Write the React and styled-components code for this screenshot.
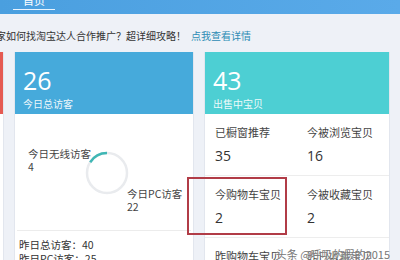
import React from 'react';
import styled, { createGlobalStyle } from 'styled-components';

const GlobalStyle = createGlobalStyle`
  body {
    margin: 0;
    background: #eef1f7;
    font-family: "Noto Sans CJK SC", "Noto Sans", sans-serif;
    color: #333;
  }
`;

const Page = styled.div`
  position: relative;
  width: 400px;
  height: 260px;
  overflow: hidden;
  background: #eef1f7;
`;

const TopBar = styled.div`
  height: 14px;
  background: linear-gradient(90deg, #4a9fdf, #5aaae9);
  display: flex;
  overflow: hidden;
`;

const Tab = styled.div`
  margin-left: 13px;
  width: 42px;
  height: 10px;
  border-bottom: 1.5px solid #e8f4ff;
  display: flex;
  justify-content: center;
  align-items: flex-end;
  color: #fff;
  font-size: 11px;
  line-height: 11px;
  padding-bottom: 3px;
  box-sizing: border-box;
`;

const Notice = styled.div`
  height: 36px;
  display: flex;
  align-items: flex-end;
  padding-bottom: 7px;
  box-sizing: border-box;
  margin-left: -4px;
  font-size: 10px;
  white-space: nowrap;
  color: #333;
`;

const Link = styled.span`
  color: #2d8cb5;
  margin-left: 5px;
`;

const Cards = styled.div`
  display: grid;
  grid-template-columns: 180px 180px 186px 180px;
  column-gap: 10px;
  margin-left: -176px;
  margin-top: 2px;
`;

const Card = styled.div`
  background: #fff;
  border: 1px solid #e2e6ee;
  border-top: none;
  height: 230px;
`;

const Header = styled.div`
  height: 62px;
  background: ${(p) => p.color};
  padding: 15px 8px 0;
  box-sizing: border-box;
  color: #fff;
`;

const BigNumber = styled.div`
  font-family: "Open Sans", "Liberation Sans", sans-serif;
  font-size: 25px;
  line-height: 26px;
`;

const HeaderLabel = styled.div`
  font-size: 10px;
  line-height: 14px;
  margin-top: 4px;
  opacity: 0.9;
`;

const ChartArea = styled.div`
  height: 116px;
  padding: 33px 0 0 13px;
  box-sizing: border-box;
  display: flex;
  align-items: flex-start;
  font-size: 10.5px;
  line-height: 13px;
  color: #444;
`;

const Legend = styled.div`
  padding-top: ${(p) => p.offset || 0}px;
  margin-left: ${(p) => p.shift || 0}px;
  white-space: nowrap;
`;

const Donut = styled.svg`
  flex: none;
  margin-top: 3px;
  margin-left: -7px;
`;

const Divider = styled.div`
  border-top: 1px solid #ececec;
  margin: 0 2px;
`;

const Yesterday = styled.div`
  padding: 7px 4px;
  font-size: 10.5px;
  line-height: 14px;
  color: #333;
`;

const Grid = styled.div`
  display: grid;
  grid-template-columns: 1fr 1fr;
`;

const Cell = styled.div`
  height: 62px;
  padding: 11px 10px 0;
  box-sizing: border-box;
  border-bottom: 1px solid #ededed;
`;

const CellLabel = styled.div`
  font-size: 11px;
  line-height: 14px;
  color: #444;
  white-space: nowrap;
`;

const CellValue = styled.div`
  font-family: "Open Sans", "Liberation Sans", sans-serif;
  font-size: 14px;
  line-height: 16px;
  margin-top: 9px;
  color: #333;
`;

const Highlight = styled.div`
  position: absolute;
  left: 187px;
  top: 177px;
  width: 100px;
  height: 58px;
  border: 2px solid #b13c47;
  box-sizing: border-box;
`;

const Watermark = styled.div`
  position: absolute;
  right: 10px;
  bottom: -2px;
  font-size: 11px;
  color: #777;
  text-shadow: 0 0 2px #fff;
  white-space: nowrap;
`;

const stats = [
  ['已橱窗推荐', '35'],
  ['今被浏览宝贝', '16'],
  ['今购物车宝贝', '2'],
  ['今被收藏宝贝', '2'],
  ['昨购物车宝贝', ''],
  ['昨日收藏宝贝', ''],
];

function Ring() {
  // light track with a short teal arc from 10 to 12 o'clock
  return (
    <Donut width="46" height="46" viewBox="0 0 46 46">
      <circle cx="23" cy="23" r="20" fill="none" stroke="#e9ebee" strokeWidth="2.5" />
      <path d="M 23 3 A 20 20 0 0 0 6.2 12.2" fill="none" stroke="#3fb7b5" strokeWidth="2.5" />
    </Donut>
  );
}

export default function App() {
  return (
    <Page>
      <GlobalStyle />
      <TopBar>
        <Tab>首页</Tab>
      </TopBar>
      <Notice>
        家如何找淘宝达人合作推广？超详细攻略！
        <Link>点我查看详情</Link>
      </Notice>
      <Cards>
        <Card>
          <Header color="#e55a52" />
        </Card>
        <Card>
          <Header color="#46aadb">
            <BigNumber>26</BigNumber>
            <HeaderLabel>今日总访客</HeaderLabel>
          </Header>
          <ChartArea>
            <Legend>今日无线访客<br />4</Legend>
            <Ring />
            <Legend offset={40} shift={-3}>今日PC访客<br />22</Legend>
          </ChartArea>
          <Divider />
          <Yesterday>
            昨日总访客：40<br />
            昨日PC访客：25
          </Yesterday>
        </Card>
        <Card>
          <Header color="#4dcfd3">
            <BigNumber>43</BigNumber>
            <HeaderLabel>出售中宝贝</HeaderLabel>
          </Header>
          <Grid>
            {stats.map(([label, value]) => (
              <Cell key={label}>
                <CellLabel>{label}</CellLabel>
                <CellValue>{value}</CellValue>
              </Cell>
            ))}
          </Grid>
        </Card>
        <Card>
          <Header color="#6a8fd2" />
        </Card>
      </Cards>
      <Highlight />
      <Watermark>头条 @呼吸的假的2015</Watermark>
    </Page>
  );
}
